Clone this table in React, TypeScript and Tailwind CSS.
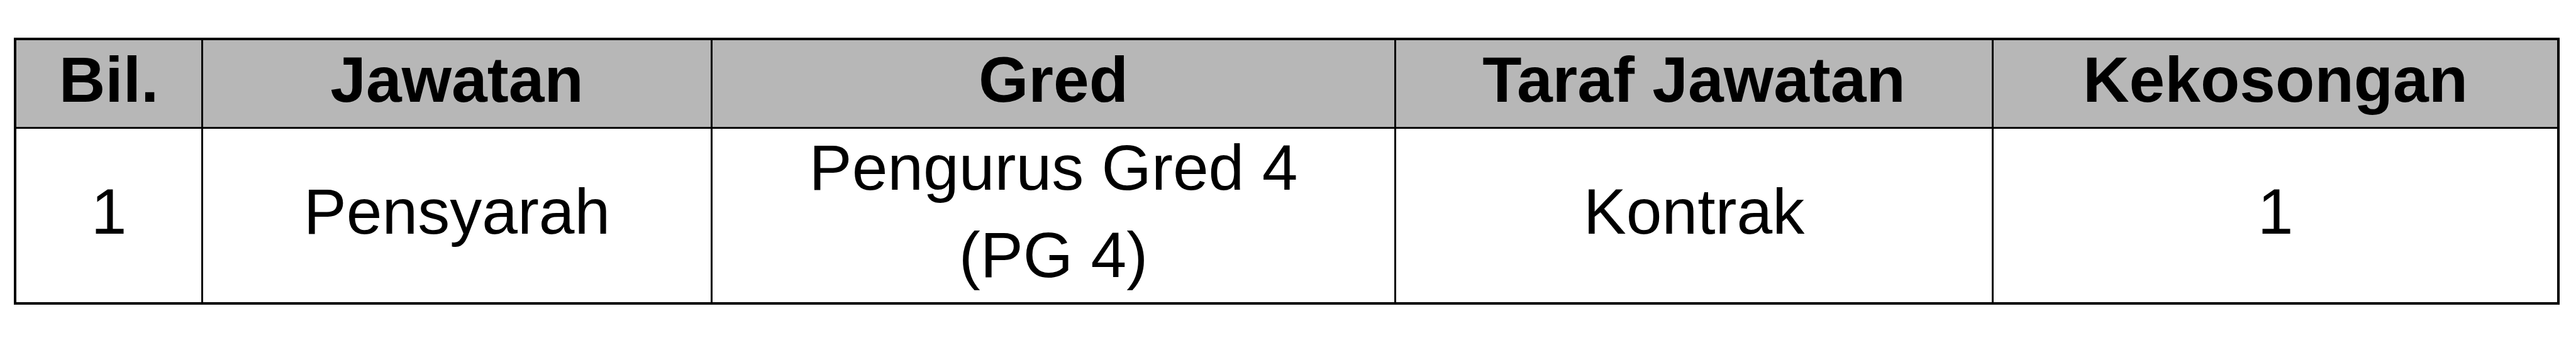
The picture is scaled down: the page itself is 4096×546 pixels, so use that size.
import React from 'react'

const headers = ['Bil.', 'Jawatan', 'Gred', 'Taraf Jawatan', 'Kekosongan']

const row = {
    bil: '1',
    jawatan: 'Pensyarah',
    gred: ['Pengurus Gred 4', '(PG 4)'],
    taraf: 'Kontrak',
    kekosongan: '1',
}

export default function App() {
    return (
        <div
            className="w-[4096px] h-[546px] bg-white pt-[60px] pl-[22px] text-black"
            style={{ fontFamily: '"Liberation Sans", Arial, sans-serif' }}
        >
            <div className="w-[4048px] border-4 border-black grid grid-cols-[297px_810px_1087px_950px_1fr] grid-rows-[141px_276px]">
                {/* Header row */}
                {headers.map((h, i) => (
                    <div
                        key={h}
                        className={
                            'flex items-center justify-center bg-[#b7b7b7] border-b-[3px] border-black pb-[12px] text-[102px] leading-[139px] font-bold ' +
                            (i < headers.length - 1 ? 'border-r-[3px]' : '')
                        }
                    >
                        {h}
                    </div>
                ))}

                {/* Data row */}
                <div className="flex items-center justify-center border-r-[3px] border-black pb-[12px] text-[102px] leading-[139px]">
                    {row.bil}
                </div>
                <div className="flex items-center justify-center border-r-[3px] border-black pb-[12px] text-[102px] leading-[139px]">
                    {row.jawatan}
                </div>
                <div className="flex flex-col items-center justify-center border-r-[3px] border-black pb-[12px] text-[102px] leading-[139px] text-center">
                    {row.gred.map((line) => (
                        <span key={line}>{line}</span>
                    ))}
                </div>
                <div className="flex items-center justify-center border-r-[3px] border-black pb-[12px] text-[102px] leading-[139px]">
                    {row.taraf}
                </div>
                <div className="flex items-center justify-center pb-[12px] text-[102px] leading-[139px]">
                    {row.kekosongan}
                </div>
            </div>
        </div>
    )
}
